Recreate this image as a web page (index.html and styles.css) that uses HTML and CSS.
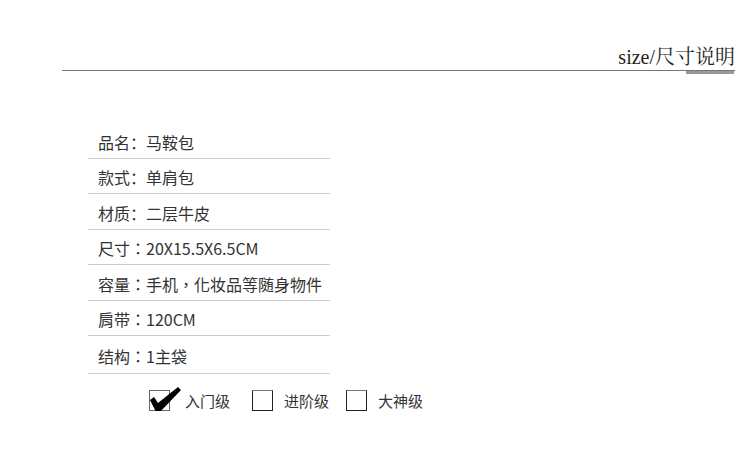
FILE: index.html
```html
<!DOCTYPE html>
<html lang="zh-CN">
<head>
    <meta charset="UTF-8">
    <meta name="viewport" content="width=device-width, initial-scale=1.0">
    <title>size/尺寸说明</title>
    <link rel="stylesheet" href="styles.css">
</head>
<body>
    <div class="header">
        <h2 class="title"><span class="latin">size/</span>尺寸说明</h2>
    </div>
    <div class="header-bar"></div>

    <div class="specs">
        <div class="row">品名：马鞍包</div>
        <div class="row">款式：单肩包</div>
        <div class="row">材质：二层牛皮</div>
        <div class="row tc" lang="zh-Hant">尺寸：20X15.5X6.5CM</div>
        <div class="row tc" lang="zh-Hant">容量：手机，化妆品等随身物件</div>
        <div class="row tc" lang="zh-Hant">肩带：120CM</div>
        <div class="row tc" lang="zh-Hant">结构：1主袋</div>
    </div>

    <div class="levels">
        <div class="level">
            <span class="box checked">
                <svg class="tick" width="34" height="28" viewBox="0 0 34 28">
                    <polygon points="1,13 5,10 9,16 29,0 32,3 11,25 7,25" fill="#000"/>
                </svg>
            </span>
            <span class="label">入门级</span>
        </div>
        <div class="level">
            <span class="box"></span>
            <span class="label">进阶级</span>
        </div>
        <div class="level">
            <span class="box"></span>
            <span class="label">大神级</span>
        </div>
    </div>
</body>
</html>
```

FILE: styles.css
```css
body {
    margin: 0;
    background: #fff;
    font-family: "Noto Sans CJK SC", "Noto Sans", sans-serif;
    color: #333;
}
.header {
    margin: 0 15px 0 62px;
    border-bottom: 1px solid #777;
}
.title {
    margin: 42px 0 0;
    line-height: 28px;
    height: 28px;
    font-size: 20px;
    font-weight: normal;
    text-align: right;
    color: #222;
    font-family: "Noto Serif CJK SC", "Liberation Serif", "Noto Sans CJK SC", serif;
}
.title .latin {
    font-family: "Liberation Serif", serif;
}
.header-bar {
    width: 48px;
    height: 3px;
    margin: 0 16px 0 auto;
    background: #999;
}
.specs {
    width: 242px;
    margin: 49px 0 0 88px;
}
.row {
    height: 35.5px;
    box-sizing: border-box;
    padding: 3px 0 0 10px;
    display: flex;
    align-items: center;
    font-size: 16px;
    border-bottom: 1px solid #ccc;
    white-space: nowrap;
}
.row.tc {
    font-family: "Noto Sans CJK TC", "Noto Sans", sans-serif;
}
.row:last-child {
    height: 38px;
}
.levels {
    display: flex;
    align-items: center;
    margin: 16px 0 0 149px;
}
.level {
    display: flex;
    align-items: center;
    margin-right: 17px;
}
.level:first-child {
    margin-right: 22px;
}
.box {
    position: relative;
    width: 21px;
    height: 21px;
    box-sizing: border-box;
    border: 1px solid #222;
    border-top-color: #777;
    margin-right: 11px;
}
.box.checked {
    border-color: #666;
    margin-right: 15px;
}
.tick {
    position: absolute;
    left: -1px;
    top: -4px;
}
.label {
    font-size: 15px;
    color: #333;
}
```
